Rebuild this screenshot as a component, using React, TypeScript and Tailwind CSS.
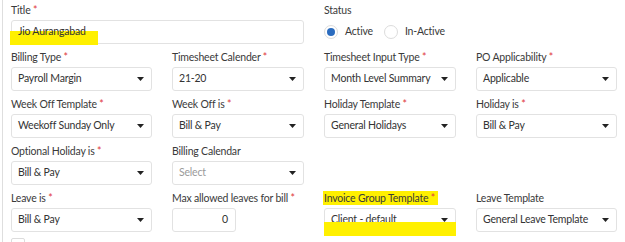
import React from "react";

type Field = {
	label: string;
	required?: boolean;
	value?: string;
	placeholder?: boolean;
	kind?: "select" | "number";
};

const Caret = () => (
	<svg width="7" height="4" viewBox="0 0 7 4" className="shrink-0">
		<path d="M0 0 L7 0 L3.5 4 Z" fill="#222" />
	</svg>
);

function Label({ text, required }: { text: string; required?: boolean }) {
	return (
		<div className="h-[14px] mb-[3px] text-[10.5px] tracking-[-0.2px] leading-[14px] text-[#3a3a3a] whitespace-nowrap">
			{text}
			{required && <span className="text-[#e0393e]"> *</span>}
		</div>
	);
}

function SelectBox({ value, placeholder }: { value: string; placeholder?: boolean }) {
	return (
		<div className="h-[24px] flex items-center justify-between pl-[6px] pr-[7px] border border-[#e2e2e2] rounded-[3px] bg-white">
			<span
				className={`text-[10.5px] tracking-[-0.2px] whitespace-nowrap ${placeholder ? "text-[#9a9a9a]" : "text-[#333]"}`}>
				{value}
			</span>
			<Caret />
		</div>
	);
}

function FieldCell({ f }: { f?: Field }) {
	if (!f) return <div />;
	return (
		<div>
			<Label text={f.label} required={f.required} />
			{f.kind === "number" ? (
				<div className="w-[64px] h-[24px] flex items-center justify-end pr-[7px] border border-[#e2e2e2] rounded-[3px] text-[10.5px] text-[#333]">
					{f.value}
				</div>
			) : (
				<SelectBox value={f.value || ""} placeholder={f.placeholder} />
			)}
		</div>
	);
}

const rows: (Field | undefined)[][] = [
	[
		{ label: "Billing Type", required: true, value: "Payroll Margin" },
		{ label: "Timesheet Calender", required: true, value: "21-20" },
		{ label: "Timesheet Input Type", required: true, value: "Month Level Summary" },
		{ label: "PO Applicability", required: true, value: "Applicable" },
	],
	[
		{ label: "Week Off Template", required: true, value: "Weekoff Sunday Only" },
		{ label: "Week Off is", required: true, value: "Bill & Pay" },
		{ label: "Holiday Template", required: true, value: "General Holidays" },
		{ label: "Holiday is", required: true, value: "Bill & Pay" },
	],
	[
		{ label: "Optional Holiday is", required: true, value: "Bill & Pay" },
		{ label: "Billing Calendar", value: "Select", placeholder: true },
		undefined,
		undefined,
	],
];

export default function App() {
	return (
		<div className="w-[625px] h-[242px] overflow-hidden bg-white font-['Lato',sans-serif]">
			<div className="ml-[2px] h-full border-l border-[#dedede] pl-[8px] pt-[3px]">
				<div className="grid grid-cols-[141px_132px_132px_141px] gap-x-[20px] gap-y-[6px]">
					{/* Title */}
					<div className="col-span-2">
						<Label text="Title" required />
						<div className="relative h-[24px] flex items-center pl-[6px] border border-[#e2e2e2] rounded-[3px] text-[10.5px] tracking-[-0.2px] text-[#333]">
							<span className="absolute left-[-2px] top-[10px] w-[88px] h-[14px] bg-[#fff000]" />
							<span className="relative">Jio Aurangabad</span>
						</div>
					</div>

					{/* Status */}
					<div className="col-span-2">
						<Label text="Status" />
						<div className="h-[24px] flex items-center text-[10.5px] tracking-[-0.2px] text-[#3a3a3a]">
							<span className="w-[14px] h-[14px] rounded-full border border-[#dcdcdc] flex items-center justify-center">
								<span className="w-[8px] h-[8px] rounded-full bg-[#2b6cbf]" />
							</span>
							<span className="ml-[7px]">Active</span>
							<span className="ml-[11px] w-[14px] h-[14px] rounded-full border border-[#dcdcdc]" />
							<span className="ml-[7px]">In-Active</span>
						</div>
					</div>

					{rows.map((r, i) => r.map((f, j) => <FieldCell key={`${i}-${j}`} f={f} />))}

					{/* last row */}
					<FieldCell f={{ label: "Leave is", required: true, value: "Bill & Pay" }} />
					<FieldCell f={{ label: "Max allowed leaves for bill", required: true, value: "0", kind: "number" }} />
					<div className="relative">
						<div className="h-[14px] mb-[3px] text-[10.5px] tracking-[-0.2px] leading-[14px] text-[#3a3a3a] whitespace-nowrap">
							<span className="relative">
								<span className="absolute left-[-1px] right-[-3px] top-[-1px] bottom-[-1px] bg-[#fff000]" />
								<span className="relative">
									Invoice Group Template<span className="text-[#e0393e]"> *</span>
								</span>
							</span>
						</div>
						<SelectBox value="Client - default" />
						<span className="absolute left-0 right-0 top-[31px] h-[14px] bg-[#fff000]" />
					</div>
					<FieldCell f={{ label: "Leave Template", value: "General Leave Template" }} />
				</div>
				<div className="mt-[6px] w-[14px] h-[14px] border border-[#dcdcdc] rounded-[2px]" />
			</div>
		</div>
	);
}
